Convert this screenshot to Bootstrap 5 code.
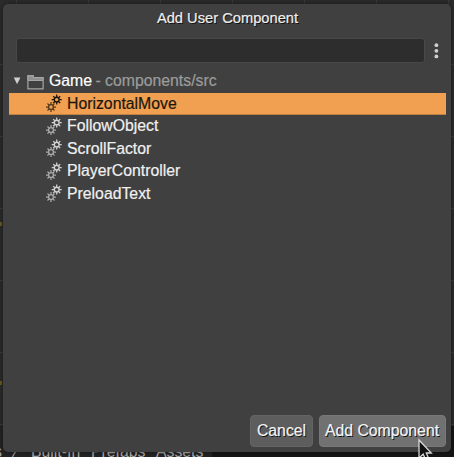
<!DOCTYPE html>
<html lang="en">
<head>
<meta charset="utf-8">
<meta name="viewport" content="width=device-width, initial-scale=1">
<title>Add User Component</title>
<link href="https://cdn.jsdelivr.net/npm/bootstrap@5.3.0/dist/css/bootstrap.min.css" rel="stylesheet">
<style>
html, body { height: 100%; }
body { font-family: "Liberation Sans", Arial, sans-serif; font-size: 15.8px; background: #2b2b2b; color: #f2f2f2; }
.stage { height: 457px; padding: 3.5px 3px 0; }
.scene { inset: 0; z-index: 0;
  background:
    repeating-linear-gradient(90deg, transparent 0 16px, #3b3b3b 16px 17px, transparent 17px 72px),
    repeating-linear-gradient(180deg, transparent 0 64px, #3b3b3b 64px 65px, transparent 65px 72px), #2b2b2b; }
.tabs-strip { left: 0; right: 0; top: 426px; height: 31px; background: linear-gradient(90deg, #242424 0 212px, #151515 212px); color: #a9a9a9; z-index: 0; }
.tabs-strip span { position: absolute; top: 17px; line-height: 18px; white-space: nowrap; }
.speck { width: 2px; height: 4px; left: 0; background: #665a1c; }
.dialog-pane { z-index: 1; height: 448.5px; background: #404040; border-radius: 5px; padding: 3px 5.5px 5px; box-shadow: 0 0 5px rgba(0,0,0,.45); }
.title { font-size: 14.7px; line-height: 22px; text-shadow: 1px 1px 0 #111; color: #eee; height: 31.5px; padding-left: 1px; -webkit-text-stroke: .2px; }
.filter-row { height: 25px; padding-left: 7px; }
.filter { width: 409px; height: 25px; min-height: 0; background: #2d2d2d; border: 1px solid #484848; border-radius: 3px; padding: 0; }
.filter:focus { background: #2d2d2d; }
.tree { margin-top: 7px; -webkit-text-stroke: .2px; }
.tree-row { height: 22.5px; line-height: 22px; white-space: nowrap; }
.root-row { padding-left: 4.5px; }
.item-row { padding-left: 37px; color: #f0f0f0; }
.item-row svg { margin-right: 5.5px; margin-top: -1px; color: #d2d2d2; -webkit-text-stroke: 0; }
.item-row.selected { background: #f0a050; color: #1b1710; box-shadow: inset 0 -1px #c08244; }
.item-row.selected svg { color: #17120b; }
.game-label { color: #fff; }
.path-label { color: #9c9c9c; margin-left: -1px; }
.dlg-btn { font-size: 15.8px; line-height: 30px; height: 32px; padding: 0; background: #5d5d5d; border: 1px solid #646464; border-radius: 4px; color: #f4f4f4; text-shadow: 1px 1px 0 #111; white-space: nowrap; width: 63px; -webkit-text-stroke: .2px; }
.dlg-btn.primary { background: #717171; border-color: #787878; width: 127px; margin-left: 1.5px; }
.pointer { left: 417px; top: 438px; z-index: 3; }
</style>
<script src="https://cdn.jsdelivr.net/npm/bootstrap@5.3.0/dist/js/bootstrap.bundle.min.js"></script>
</head>
<body class="overflow-hidden">
<svg width="0" height="0" class="position-absolute">
  <defs>
    <g id="cog">
      <circle r="2.4" fill="none" stroke="currentColor" stroke-width="1.4"/>
      <path d="M0-2.7V-5M0 2.7V5M-2.7 0H-5M2.7 0H5M1.9-1.9L3.5-3.5M-1.9-1.9L-3.5-3.5M1.9 1.9L3.5 3.5M-1.9 1.9L-3.5 3.5" stroke="currentColor" stroke-width="1.25" fill="none"/>
    </g>
    <symbol id="cogs" viewBox="0 0 16 18">
      <use href="#cog" x="10.7" y="5.6"/>
      <use href="#cog" x="5" y="13" opacity=".72"/>
    </symbol>
  </defs>
</svg>
<div class="stage position-relative overflow-hidden">
  <div class="scene position-absolute">
    <div class="speck position-absolute" style="top:222px"></div>
    <div class="speck position-absolute" style="top:381px"></div>
  </div>
  <div class="tabs-strip position-absolute">
    <span style="left:-6px">s</span><span style="left:15px">⁄</span><span style="left:31px">Built-In</span><span style="left:91px">Prefabs</span><span style="left:156px">Assets</span>
  </div>

  <div class="dialog-pane position-relative d-flex flex-column" role="dialog" aria-label="Add User Component">
    <div class="title text-center">Add User Component</div>
    <div class="filter-row d-flex align-items-center">
      <input class="filter form-control" type="text" aria-label="Filter">
      <svg class="ms-2" width="8" height="19" viewBox="0 0 8 19" fill="#d0d0d0"><circle cx="3.4" cy="4.2" r="1.9"/><circle cx="3.4" cy="9.8" r="1.9"/><circle cx="3.4" cy="15.4" r="1.9"/></svg>
    </div>
    <div class="tree">
      <div class="tree-row root-row d-flex align-items-center">
        <svg width="36" height="20" viewBox="0 0 36 20">
          <path d="M.8 6.5H7.4L4.1 13.2Z" fill="#d0d0d0"/>
          <path d="M14.2 4H20.6V6.2H30.7V9H14.2Z" fill="#8f8f8f"/>
          <path d="M14.9 17.8V4.8H20.4V6.6H30.1V17.8ZM15 9.5H30" fill="none" stroke="#a5a5a5" stroke-width="1.2"/>
        </svg>
        <span class="game-label">Game</span><span class="path-label">&nbsp;- components/src</span>
      </div>
      <div class="tree-row item-row selected d-flex align-items-center"><svg width="16" height="18"><use href="#cogs"/></svg>HorizontalMove</div>
      <div class="tree-row item-row d-flex align-items-center"><svg width="16" height="18"><use href="#cogs"/></svg>FollowObject</div>
      <div class="tree-row item-row d-flex align-items-center"><svg width="16" height="18"><use href="#cogs"/></svg>ScrollFactor</div>
      <div class="tree-row item-row d-flex align-items-center"><svg width="16" height="18"><use href="#cogs"/></svg>PlayerController</div>
      <div class="tree-row item-row d-flex align-items-center"><svg width="16" height="18"><use href="#cogs"/></svg>PreloadText</div>
    </div>
    <div class="d-flex justify-content-end gap-1 mt-auto">
      <button class="btn dlg-btn" type="button">Cancel</button>
      <button class="btn dlg-btn primary" type="button">Add Component</button>
    </div>
  </div>
  <svg class="pointer position-absolute" width="18" height="24" viewBox="0 0 18 24"><path d="M2 2V20L6.2 16.2L9 22.5L12 21.2L9.3 15H14.3Z" fill="#111" stroke="#d8d8d8" stroke-width="1.3"/></svg>
</div>
</body>
</html>
